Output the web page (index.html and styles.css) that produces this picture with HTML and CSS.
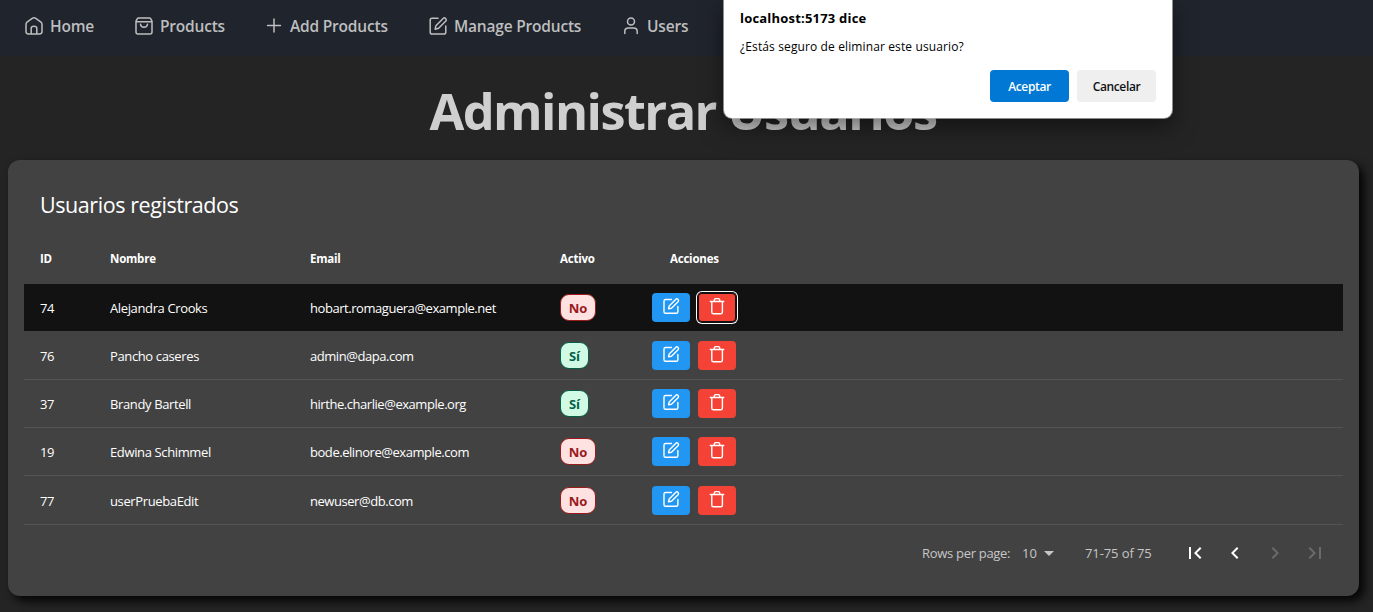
FILE: index.html
```html
<!DOCTYPE html>
<html lang="es">
<head>
<meta charset="utf-8">
<title>Administrar Usuarios</title>
<link rel="stylesheet" href="styles.css">
</head>
<body>
<svg class="sprite" aria-hidden="true">
  <symbol id="home" viewBox="0 0 20 20"><path d="M2 8.4Q2 7 3 6.2L8.6 2.2Q10 1.3 11.4 2.2L17 6.2Q18 7 18 8.4V15.6Q18 18 15.6 18H4.4Q2 18 2 15.6ZM7.2 18V12.3Q7.2 10.2 10 10.2T12.8 12.3V18"/></symbol>
  <symbol id="bag" viewBox="0 0 20 20"><path d="M2 5.2L3.2 2.9Q3.7 2 4.7 2H15.3Q16.3 2 16.8 2.9L18 5.2V16Q18 18 16 18H4Q2 18 2 16ZM2 5.7H18M6.5 8.3Q6.8 11.3 10 11.3T13.5 8.3"/></symbol>
  <symbol id="plus" viewBox="0 0 20 20"><path d="M10 3V16M3.5 9.5H16.5"/></symbol>
  <symbol id="edit" viewBox="0 0 20 20"><path d="M10 2.2H4Q2.2 2.2 2.2 4V16.2Q2.2 18 4 18H15.8Q17.8 18 17.8 16.2V10M7.2 13.2L7.9 9.7L15.4 2.2Q16.4 1.4 17.5 2.4T18.1 4.8L10.6 12.3Z"/></symbol>
  <symbol id="user" viewBox="0 0 20 20"><circle cx="10" cy="5.5" r="3.5"/><path d="M3.8 17.5V15.5Q3.8 12.1 7.5 12.1H12.5Q16.2 12.1 16.2 15.5V17.5"/></symbol>
  <symbol id="pen" viewBox="0 0 18 18"><path d="M9.5 2.5H3.5Q2 2.5 2 4V14.8Q2 16.3 3.5 16.3H14.3Q15.9 16.3 15.9 14.8V9.5M6.5 11.8L7.2 8.9L13.9 2.2Q14.8 1.3 15.9 2.3T16.3 4.5L9.5 11.2Z"/></symbol>
  <symbol id="trash" viewBox="0 0 18 18"><path d="M2.3 4.5H15.7M6 4.3L6.5 2.5Q6.8 1.6 7.6 1.6H10.4Q11.2 1.6 11.5 2.5L12 4.3M3.8 4.7V15.3Q3.8 16.8 5.3 16.8H12.9Q14.4 16.8 14.4 15.3V4.7"/></symbol>
</svg>

<nav class="nav">
  <a class="nav-item home"><svg><use href="#home"/></svg><span>Home</span></a>
  <a class="nav-item products"><svg><use href="#bag"/></svg><span>Products</span></a>
  <a class="nav-item add"><svg><use href="#plus"/></svg><span>Add Products</span></a>
  <a class="nav-item manage"><svg><use href="#edit"/></svg><span>Manage Products</span></a>
  <a class="nav-item users"><svg><use href="#user"/></svg><span>Users</span></a>
</nav>

<h1 class="title">Administrar Usuarios</h1>

<main class="card">
  <h2 class="card-title">Usuarios registrados</h2>
  <div class="row head">
    <span>ID</span><span>Nombre</span><span>Email</span><span>Activo</span><span class="head-actions">Acciones</span>
  </div>
  <div class="row active">
    <span>74</span><span>Alejandra Crooks</span><span class="mail">hobart.romaguera@example.net</span><span><b class="badge no">No</b></span>
    <span class="actions"><button class="btn edit"><svg><use href="#pen"/></svg></button><button class="btn delete focused"><svg><use href="#trash"/></svg></button></span>
  </div>
  <div class="row">
    <span>76</span><span>Pancho caseres</span><span class="mail">admin@dapa.com</span><span><b class="badge yes">Sí</b></span>
    <span class="actions"><button class="btn edit"><svg><use href="#pen"/></svg></button><button class="btn delete"><svg><use href="#trash"/></svg></button></span>
  </div>
  <div class="row">
    <span>37</span><span>Brandy Bartell</span><span class="mail">hirthe.charlie@example.org</span><span><b class="badge yes">Sí</b></span>
    <span class="actions"><button class="btn edit"><svg><use href="#pen"/></svg></button><button class="btn delete"><svg><use href="#trash"/></svg></button></span>
  </div>
  <div class="row">
    <span>19</span><span>Edwina Schimmel</span><span class="mail">bode.elinore@example.com</span><span><b class="badge no">No</b></span>
    <span class="actions"><button class="btn edit"><svg><use href="#pen"/></svg></button><button class="btn delete"><svg><use href="#trash"/></svg></button></span>
  </div>
  <div class="row last">
    <span>77</span><span>userPruebaEdit</span><span class="mail">newuser@db.com</span><span><b class="badge no">No</b></span>
    <span class="actions"><button class="btn edit"><svg><use href="#pen"/></svg></button><button class="btn delete"><svg><use href="#trash"/></svg></button></span>
  </div>
  <div class="pagination">
    <span class="per-page">Rows per page:</span>
    <span class="size">10</span>
    <svg class="caret" viewBox="0 0 10 5"><path d="M0 0H10L5 5Z"/></svg>
    <span class="range">71-75 of 75</span>
    <span class="pages">
      <svg viewBox="0 0 24 24"><path d="M18.41 16.59L13.82 12l4.59-4.59L17 6l-6 6 6 6zM6 6h2v12H6z"/></svg>
      <svg viewBox="0 0 24 24"><path d="M15.41 7.41L14 6l-6 6 6 6 1.41-1.41L10.83 12z"/></svg>
      <svg class="off" viewBox="0 0 24 24"><path d="M10 6L8.59 7.41 13.17 12l-4.58 4.59L10 18l6-6z"/></svg>
      <svg class="off" viewBox="0 0 24 24"><path d="M5.59 7.41L10.18 12l-4.59 4.59L7 18l6-6-6-6zM16 6h2v12h-2z"/></svg>
    </span>
  </div>
</main>

<div class="dialog" role="dialog">
  <div class="dialog-title">localhost:5173 dice</div>
  <div class="dialog-text">¿Estás seguro de eliminar este usuario?</div>
  <div class="dialog-buttons"><button class="accept">Aceptar</button><button class="cancel">Cancelar</button></div>
</div>
</body>
</html>
```
FILE: styles.css
```css
* { box-sizing: border-box; }
body {
  margin: 0;
  height: 612px;
  overflow: hidden;
  background: #242424;
  color: #fff;
  font-family: "Segoe UI", "Open Sans", "Noto Sans", sans-serif;
  font-size: 13px;
  white-space: nowrap;
}
button { font-family: inherit; border: 0; padding: 0; }
.sprite { position: absolute; width: 0; height: 0; }

.nav {
  display: flex;
  gap: 40px;
  height: 56px;
  padding: 0 24px 4px;
  background: #20242c;
  color: #bdbebf;
}
.nav-item { display: flex; align-items: center; gap: 6px; font-size: 15.5px; font-weight: 600; letter-spacing: -.2px; }
.nav-item svg { flex: none; width: 20px; height: 20px; fill: none; stroke: currentColor; stroke-width: 1.5; stroke-linejoin: round; stroke-linecap: round; }
.home { width: 70px; }
.products { width: 90px; }
.add { width: 124px; }
.manage { width: 153px; }
.users { width: 66px; }

.title {
  margin: 0 7px 0 0;
  height: 104px;
  line-height: 109px;
  text-align: center;
  color: #cfcfcf;
  font-size: 50.5px;
  font-weight: 700;
  letter-spacing: -1.57px;
}

.card {
  margin: 0 14px 0 8px;
  height: 436px;
  padding: 24px 16px 0;
  border-radius: 12px;
  background: #424242;
  box-shadow: 5px 5px 10px rgba(0, 0, 0, .9);
}
.card-title { margin: 0; height: 50px; padding-left: 16px; font-size: 21.5px; font-weight: 400; line-height: 42px; letter-spacing: -.43px; }

.row {
  display: grid;
  grid-template-columns: 70px 200px 250px 92px auto;
  align-items: center;
  height: 48px;
  padding-left: 16px;
  border-bottom: 1px solid #545454;
  letter-spacing: -.37px;
}
.row.head { height: 50px; padding-bottom: 2px; border: 0; font-size: 11.5px; font-weight: 700; letter-spacing: -.22px; }
.mail { letter-spacing: -.45px; }
.head-actions { padding-left: 18px; }
.row.active { background: #121212; border-color: #424242; }
.row.last { height: 49px; padding-top: 1px; }

.badge {
  display: block;
  width: 36px;
  height: 27px;
  border: 1px solid;
  border-radius: 9px;
  line-height: 26px;
  text-align: center;
  font-size: 13px;
  letter-spacing: 0;
}
.badge.no { background: #fee2e2; border-color: #991b1b; color: #991b1b; }
.badge.yes { width: 29px; background: #d1fae5; border-color: #065f46; color: #065f46; }

.actions { display: flex; gap: 8px; }
.btn { display: flex; justify-content: center; width: 38px; height: 29px; padding-top: 4px; border-radius: 4px; }
.btn svg { width: 18px; height: 18px; fill: none; stroke: #fff; stroke-width: 1.4; stroke-linejoin: round; stroke-linecap: round; }
.edit { background: #2196f3; }
.delete { background: #f44336; }
.focused { box-shadow: inset 0 0 0 1px #101010, 0 0 0 1px #101010, 0 0 0 2px #fff; }

.pagination { display: flex; align-items: center; justify-content: flex-end; height: 56px; padding-right: 16px; color: #c6c6c6; }
.per-page { width: 88px; margin-right: 12px; letter-spacing: -.3px; }
.size { width: 22px; }
.caret { width: 10px; height: 5px; fill: #c6c6c6; }
.range { width: 67px; margin-left: 31px; letter-spacing: -.1px; }
.pages { display: flex; gap: 16px; margin-left: 31px; }
.pages svg { width: 24px; height: 24px; fill: #fff; }
.pages .off { fill: #6a6a6a; }

.dialog {
  position: absolute;
  left: 724px;
  top: 0;
  width: 448px;
  height: 118px;
  padding: 8px 16px 0;
  border-radius: 0 0 8px 8px;
  background: #fff;
  color: #000;
  box-shadow: 0 0 0 1px rgba(190, 190, 190, .7), 0 8px 24px rgba(0, 0, 0, .5);
}
.dialog-title { height: 28px; font-size: 13px; font-weight: 700; line-height: 20px; letter-spacing: .2px; }
.dialog-text { height: 34px; font-size: 12px; line-height: 22px; letter-spacing: .12px; }
.dialog-buttons { display: flex; justify-content: flex-end; gap: 8px; }
.dialog-buttons button { width: 79px; height: 32px; border-radius: 4px; font-size: 12px; font-weight: 600; letter-spacing: -.35px; }
.accept { background: #0078d4; color: #fff; }
.cancel { background: #efefef; color: #111; }
```
